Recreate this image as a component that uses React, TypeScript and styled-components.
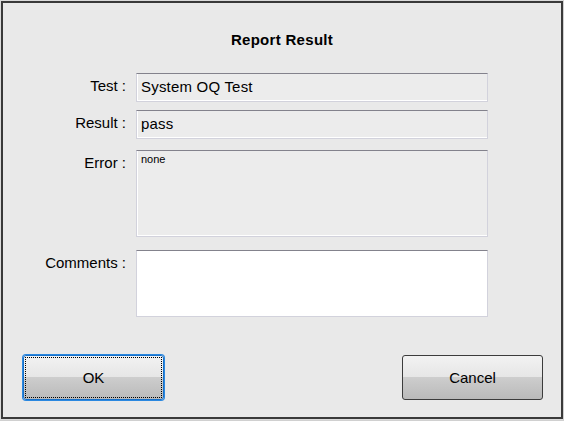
import * as React from "react"
import styled, { createGlobalStyle } from "styled-components"

const GlobalStyle = createGlobalStyle`
  html, body {
    margin: 0;
    padding: 0;
    background: #e4e4e4;
  }
  body {
    font-family: "Liberation Sans", Arial, sans-serif;
  }
`

const Window = styled.div`
  width: 566px;
  height: 423px;
  box-sizing: border-box;
  padding: 1px 3px 4px 1px;
  background: #dcdcdc;
  box-shadow: inset -2px -2px 0 #ffffff, inset -3px -3px 0 #d0d0d0;
`

const Dialog = styled.div`
  height: 100%;
  box-sizing: border-box;
  border: 2px solid #3a3a3a;
  background: #e9e9e9;
  display: flex;
  flex-direction: column;
  padding: 28px 0 17px 0;
`

const Title = styled.div`
  text-align: center;
  font-weight: bold;
  font-size: 15px;
  letter-spacing: 0.3px;
  line-height: 18px;
  color: #000;
`

const Form = styled.div`
  display: grid;
  grid-template-columns: 123px 352px;
  column-gap: 10px;
  margin-top: 24px;
`

const Label = styled.div<{ gap: number }>`
  text-align: right;
  font-size: 15px;
  line-height: 18px;
  padding-top: 4px;
  margin-top: ${p => p.gap}px;
  color: #000;
  white-space: nowrap;
`

const Field = styled.div<{ h: number; gap: number; editable?: boolean }>`
  height: ${p => p.h}px;
  margin-top: ${p => p.gap}px;
  box-sizing: border-box;
  border: 1px solid #d2d2dc;
  border-top-color: #83828c;
  box-shadow: inset 0 -1px 0 #ffffff, inset 1px 0 0 #ffffff;
  background: ${p => (p.editable ? "#ffffff" : "#ececec")};
  padding-left: 4px;
  color: #000;
`

const FieldText = styled.div`
  font-size: 15px;
  letter-spacing: 0.2px;
  line-height: 26px;
`

const SmallText = styled.div`
  font-size: 11px;
  line-height: 13px;
  padding-top: 2px;
  color: #000;
`

const ButtonRow = styled.div`
  display: flex;
  justify-content: space-between;
  margin-top: auto;
  padding: 0 18px 0 20px;
`

const Button = styled.button<{ focused?: boolean }>`
  position: relative;
  width: 141px;
  height: 45px;
  box-sizing: border-box;
  border: 1px solid ${p => (p.focused ? "#1870c8" : "#3c3c3c")};
  box-shadow: ${p => (p.focused ? "0 0 0 1px #2a88e0" : "none")};
  border-radius: 3px;
  background: linear-gradient(
    to bottom,
    #f2f2f2 0%,
    #e6e6e6 48%,
    #cdcdcd 50%,
    #bababa 100%
  );
  font-family: "Liberation Sans", Arial, sans-serif;
  font-size: 15px;
  color: #000;
  padding: 0;
  cursor: default;
`

const FocusRing = styled.span`
  position: absolute;
  inset: 1px;
  border: 1px dotted #000;
  pointer-events: none;
`

export default function App() {
  return (
    <>
      <GlobalStyle />
      <Window>
        <Dialog>
          <Title>Report Result</Title>
          <Form>
            <Label gap={0}>Test :</Label>
            <Field h={29} gap={0}>
              <FieldText>System OQ Test</FieldText>
            </Field>
            <Label gap={8}>Result :</Label>
            <Field h={29} gap={8}>
              <FieldText>pass</FieldText>
            </Field>
            <Label gap={11}>Error :</Label>
            <Field h={87} gap={11}>
              <SmallText>none</SmallText>
            </Field>
            <Label gap={13}>Comments :</Label>
            <Field h={67} gap={13} editable />
          </Form>
          <ButtonRow>
            <Button focused>
              OK
              <FocusRing />
            </Button>
            <Button>Cancel</Button>
          </ButtonRow>
        </Dialog>
      </Window>
    </>
  )
}
